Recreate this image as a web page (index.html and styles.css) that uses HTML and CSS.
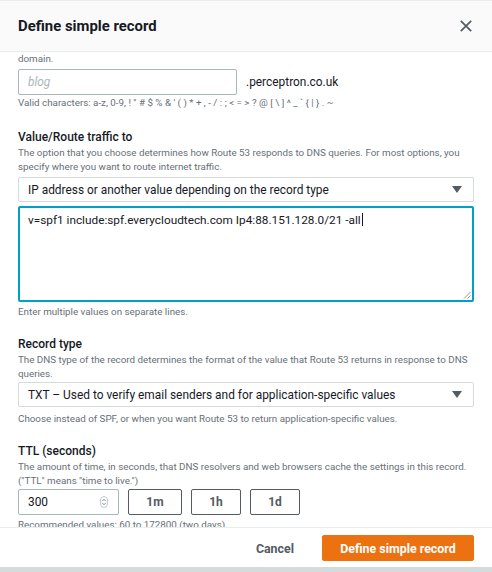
FILE: index.html
```html
<!DOCTYPE html>
<html lang="en">
<head>
<meta charset="utf-8">
<title>Define simple record</title>
<link rel="stylesheet" href="styles.css">
</head>
<body>
<div class="modal">
  <header class="modal-header">
    <h1 class="modal-title">Define simple record</h1>
    <button class="close" aria-label="Close">
      <svg width="12" height="12" viewBox="0 0 12 12"><path d="M0.8 0.8 L11.2 11.2 M11.2 0.8 L0.8 11.2" stroke="#545b64" stroke-width="1.7" fill="none"/></svg>
    </button>
  </header>
  <div class="modal-body">
    <p class="desc">domain.</p>
    <div class="name-row">
      <div class="input name-input"><span class="placeholder">blog</span></div>
      <span class="suffix">.perceptron.co.uk</span>
    </div>
    <p class="desc valid">Valid characters: a-z, 0-9, ! " # $ % &amp; ' ( ) * + , - / : ; &lt; = &gt; ? @ [ \ ] ^ _ ` { | } . ~</p>

    <section class="field">
      <h2 class="label">Value/Route traffic to</h2>
      <p class="desc">The option that you choose determines how Route 53 responds to DNS queries. For most options, you specify where you want to route internet traffic.</p>
      <div class="select"><span>IP address or another value depending on the record type</span><span class="caret"></span></div>
      <div class="textarea"><span>v=spf1 include:spf.everycloudtech.com Ip4:88.151.128.0/21 -all</span><span class="cursor"></span>
        <svg class="grip" width="8" height="8" viewBox="0 0 8 8"><path d="M7.5 1 L1 7.5 M7.5 4.5 L4.5 7.5" stroke="#8d999a" stroke-width="1"/></svg>
      </div>
      <p class="desc after-area">Enter multiple values on separate lines.</p>
    </section>

    <section class="field">
      <h2 class="label">Record type</h2>
      <p class="desc">The DNS type of the record determines the format of the value that Route 53 returns in response to DNS queries.</p>
      <div class="select tight"><span>TXT – Used to verify email senders and for application-specific values</span><span class="caret"></span></div>
      <p class="desc after-select">Choose instead of SPF, or when you want Route 53 to return application-specific values.</p>
    </section>

    <section class="field">
      <h2 class="label">TTL (seconds)</h2>
      <p class="desc">The amount of time, in seconds, that DNS resolvers and web browsers cache the settings in this record. ("TTL" means "time to live.")</p>
      <div class="ttl-row">
        <div class="input ttl-input"><span>300</span>
          <svg class="spin" width="8" height="12" viewBox="0 0 8 12"><rect x="0.5" y="0.5" width="7" height="11" rx="3.5" fill="none" stroke="#c6cdd0"/><path d="M2.5 4.8 L4 3.3 L5.5 4.8 M2.5 7.2 L4 8.7 L5.5 7.2" stroke="#687078" fill="none" stroke-width="0.9"/></svg>
        </div>
        <button class="btn-outline w1m">1m</button>
        <button class="btn-outline w1h">1h</button>
        <button class="btn-outline w1d">1d</button>
      </div>
      <p class="desc">Recommended values: 60 to 172800 (two days)</p>
    </section>
  </div>
  <footer class="modal-footer">
    <button class="btn-link">Cancel</button>
    <button class="btn-primary">Define simple record</button>
  </footer>
</div>
</body>
</html>
```

FILE: styles.css
```css
* { box-sizing: border-box; }
html, body { margin: 0; padding: 0; background: #fff; }
body {
  width: 492px;
  height: 572px;
  overflow: hidden;
  font-family: "Roboto", "Lato", sans-serif;
  color: #16191f;
}
.modal {
  display: flex;
  flex-direction: column;
  height: 572px;
  border-top: 1px solid #e9ebed;
  border-bottom: 5px solid #d5dbdb;
}
.modal-header {
  height: 51px;
  flex: none;
  background: #fafafa;
  border-bottom: 1px solid #eaeded;
  display: flex;
  align-items: center;
  justify-content: space-between;
  padding: 0 20px 0 18px;
}
.modal-title {
  margin: 0;
  font-size: 14.9px;
  font-weight: 700;
  color: #16191f;
}
.close {
  border: 0;
  background: none;
  padding: 0;
  width: 12px;
  height: 12px;
  display: flex;
}
.modal-body {
  height: 475px;
  flex: none;
  overflow: hidden;
  padding: 0 8px 0 18px;
}
.desc {
  margin: 0;
  font-size: 9.8px;
  line-height: 14px;
  color: #687078;
}
.name-row {
  display: flex;
  align-items: center;
  gap: 9px;
  margin-top: 3px;
}
.input {
  height: 26px;
  border: 1px solid #aab7b8;
  border-radius: 2px;
  display: flex;
  align-items: center;
  padding: 0 9px;
  font-size: 11.9px;
  color: #16191f;
}
.name-input { width: 219px; height: 26px; }
.placeholder { color: #aab7b8; font-style: italic; }
.suffix { font-size: 11.9px; color: #16191f; }
.valid { margin-top: 1px; }
.field { margin-top: 18px; }
.field + .field { margin-top: 16px; }
.label {
  margin: 0;
  font-size: 12px;
  line-height: 18px;
  font-weight: 500;
  color: #16191f;
}
.select {
  width: 456px;
  margin-top: 3px;
  height: 25px;
  border: 1px solid #d5dbdb;
  border-radius: 2px;
  display: flex;
  align-items: center;
  justify-content: space-between;
  padding: 0 11px 0 9px;
  font-size: 11.9px;
  color: #16191f;
}
.select.tight { margin-top: 1px; }
.caret {
  width: 0; height: 0;
  border-left: 5px solid transparent;
  border-right: 5px solid transparent;
  border-top: 7px solid #545b64;
}
.after-select { margin-top: 5px; }
.textarea {
  position: relative;
  width: 456px;
  margin-top: 4px;
  height: 96px;
  border: 2px solid #00a1c9;
  border-radius: 2px;
  padding: 4px 8px;
  font-size: 11.8px;
  line-height: 16px;
  color: #16191f;
}
.cursor {
  display: inline-block;
  width: 1px;
  height: 13px;
  margin-left: 1px;
  background: #16191f;
  vertical-align: -2px;
}
.grip { position: absolute; right: 1px; bottom: 1px; }
.after-area { margin-top: 3px; }
.ttl-row {
  display: flex;
  gap: 9px;
  margin-top: 1px;
  margin-bottom: 3px;
}
.ttl-input {
  width: 101px;
  height: 26px;
  justify-content: space-between;
  padding: 0 10px 0 9px;
}
.btn-outline {
  height: 26px;
  border: 1px solid #545b64;
  border-radius: 2px;
  background: #fff;
  font-family: inherit;
  font-size: 12px;
  font-weight: 700;
  color: #545b64;
  padding: 0;
}
.w1m { width: 54px; }
.w1h { width: 50px; }
.w1d { width: 50px; }
.modal-footer {
  flex: 1;
  border-top: 1px solid #eaeded;
  display: flex;
  align-items: center;
  justify-content: flex-end;
  padding: 1px 18px 0 0;
  gap: 28px;
}
.btn-link {
  border: 0;
  background: none;
  font-family: inherit;
  font-size: 12.4px;
  font-weight: 700;
  color: #545b64;
  padding: 0;
}
.btn-primary {
  width: 152px;
  height: 26px;
  border: 1px solid #ec7211;
  border-radius: 2px;
  background: #ec7211;
  color: #fff;
  font-family: inherit;
  font-size: 12.4px;
  font-weight: 700;
  padding: 0;
}
```
